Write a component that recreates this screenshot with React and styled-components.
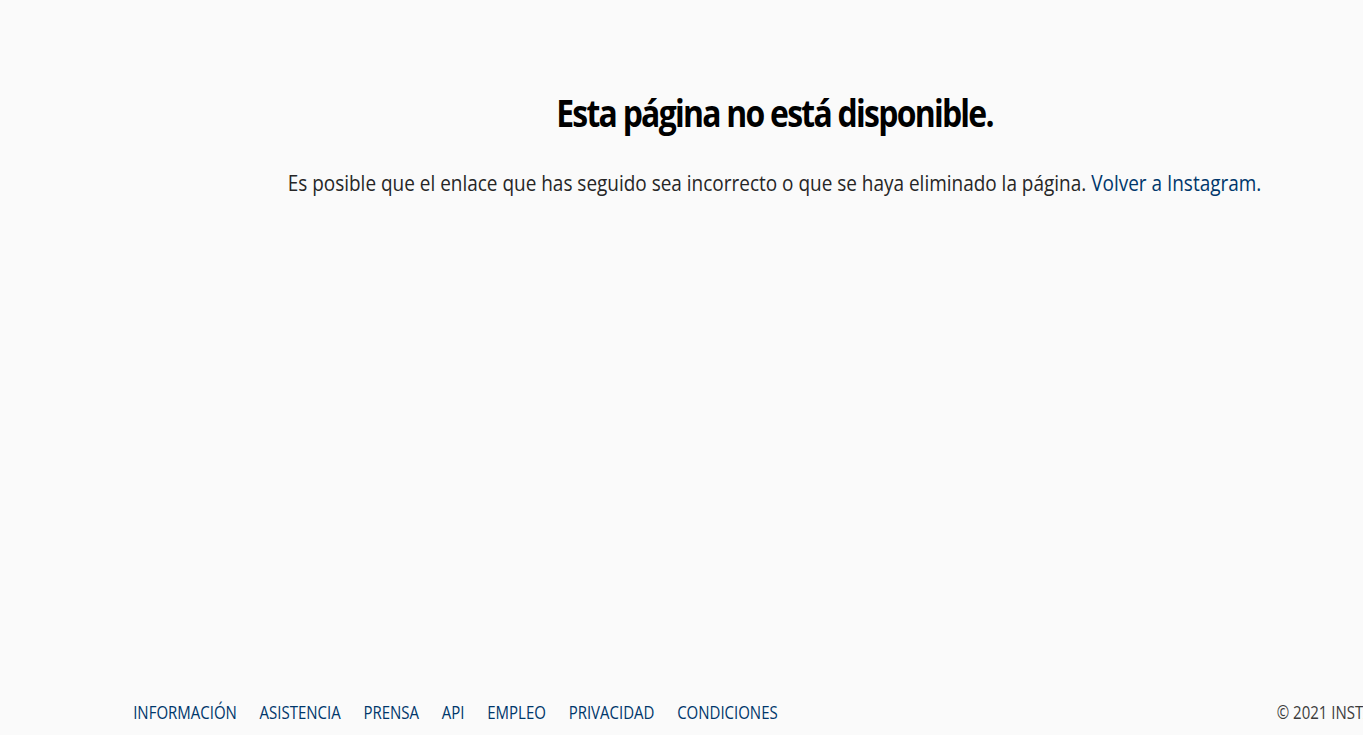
import React from 'react'
import styled, { createGlobalStyle } from 'styled-components'

const SQUEEZE = 0.862

const GlobalStyle = createGlobalStyle`
  html, body {
    margin: 0;
    padding: 0;
    background: #fafafa;
    overflow: hidden;
  }
  body {
    font-family: "Open Sans", "Noto Sans", sans-serif;
    color: #262626;
  }
`

// the whole page is drawn narrow, like a condensed UI font
const Page = styled.div`
  width: 1797px;
  height: 735px;
  display: flex;
  flex-direction: column;
  transform: scaleX(${SQUEEZE});
  transform-origin: 0 0;
`

const Main = styled.main`
  flex: 1;
  display: flex;
  flex-direction: column;
  align-items: center;
  padding-top: 90px;
`

const Title = styled.h2`
  margin: 0;
  font-size: 37px;
  line-height: 46px;
  font-weight: 700;
  color: #000;
  letter-spacing: -2px;
`

const Message = styled.p`
  margin: 31px 0 0;
  font-size: 22px;
  line-height: 30px;
  color: #262626;
`

const Link = styled.a`
  color: #00376b;
  text-decoration: none;
`

const Footer = styled.footer`
  width: 1488px;
  margin: 0 auto;
  padding-bottom: 8px;
  display: flex;
  align-items: center;
  justify-content: space-between;
`

const Nav = styled.nav`
  display: flex;
  gap: 26.4px;
`

const NavLink = styled.a`
  font-size: 17.4px;
  line-height: 30px;
  color: #00376b;
  text-decoration: none;
  text-transform: uppercase;
`

const Copyright = styled.span`
  font-size: 17.4px;
  line-height: 30px;
  color: #3c3c3c;
  text-transform: uppercase;
`

const links = ['Información', 'Asistencia', 'Prensa', 'API', 'Empleo', 'Privacidad', 'Condiciones']

export default function App() {
  return (
    <>
      <GlobalStyle />
      <Page>
        <Main>
          <Title>Esta página no está disponible.</Title>
          <Message>
            Es posible que el enlace que has seguido sea incorrecto o que se haya eliminado la página.{' '}
            <Link href="#">Volver a Instagram.</Link>
          </Message>
        </Main>
        <Footer>
          <Nav>
            {links.map((l) => (
              <NavLink key={l} href="#">{l}</NavLink>
            ))}
          </Nav>
          <Copyright>© 2021 Instagram</Copyright>
        </Footer>
      </Page>
    </>
  )
}
